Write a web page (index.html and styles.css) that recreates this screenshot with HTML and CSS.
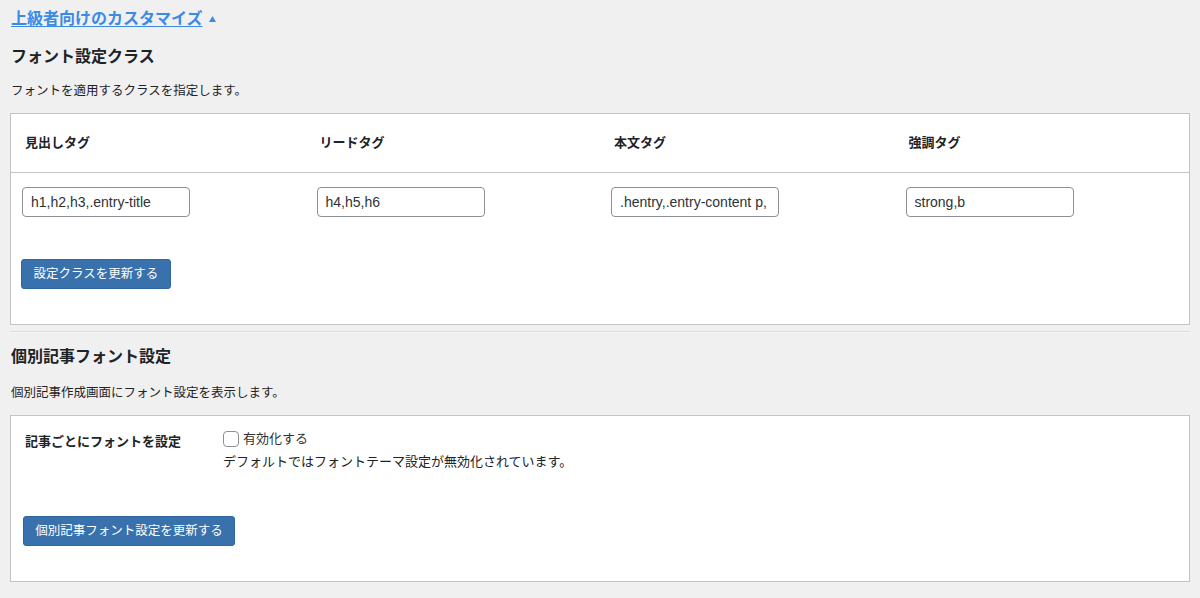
FILE: index.html
```html
<!DOCTYPE html>
<html lang="ja">
<head>
<meta charset="utf-8">
<title>上級者向けのカスタマイズ</title>
<link rel="stylesheet" href="styles.css">
</head>
<body>
<div class="page">
  <div class="toggle"><a href="#" class="toggle-link">上級者向けのカスタマイズ</a><svg class="caret" width="7" height="6" viewBox="0 0 7 6" aria-hidden="true"><polygon points="3.5,0 7,6 0,6" fill="#3b8be4"/></svg></div>

  <h2 class="sec-title first">フォント設定クラス</h2>
  <p class="sec-desc">フォントを適用するクラスを指定します。</p>
  <div class="box">
    <div class="class-grid head">
      <div class="th">見出しタグ</div>
      <div class="th">リードタグ</div>
      <div class="th">本文タグ</div>
      <div class="th">強調タグ</div>
    </div>
    <div class="class-grid body-row">
      <div class="td"><input class="text-input" type="text" value="h1,h2,h3,.entry-title"></div>
      <div class="td"><input class="text-input" type="text" value="h4,h5,h6"></div>
      <div class="td"><input class="text-input" type="text" value=".hentry,.entry-content p,"></div>
      <div class="td"><input class="text-input" type="text" value="strong,b"></div>
    </div>
    <div class="btn-row"><button class="btn" type="button">設定クラスを更新する</button></div>
  </div>

  <hr class="sep">

  <h2 class="sec-title second">個別記事フォント設定</h2>
  <p class="sec-desc second">個別記事作成画面にフォント設定を表示します。</p>
  <div class="box box2">
    <div class="form-row">
      <div class="form-label">記事ごとにフォントを設定</div>
      <div class="form-control">
        <label class="check"><input type="checkbox" class="checkbox"><span>有効化する</span></label>
        <p class="hint">デフォルトではフォントテーマ設定が無効化されています。</p>
      </div>
    </div>
    <div class="btn-row2"><button class="btn" type="button">個別記事フォント設定を更新する</button></div>
  </div>
</div>
</body>
</html>
```

FILE: styles.css
```css
* { box-sizing: border-box; }
html, body { margin: 0; padding: 0; }
body {
  background: #f0f0f1;
  color: #1d2327;
  font-family: "Liberation Sans", "Noto Sans CJK JP", sans-serif;
  font-size: 13px;
}
.page { padding: 0 10px; }

.toggle {
  padding-top: 8px;
  height: 30px;
  line-height: 22px;
  font-size: 16px;
  padding-left: 1px;
}
.toggle-link {
  color: #3b8be4;
  font-weight: 600;
  text-decoration: underline;
  text-underline-offset: 2px;
}
.caret {
  margin-left: 6px;
  vertical-align: 2px;
}

.sec-title {
  margin: 0;
  font-size: 16px;
  line-height: 22px;
  font-weight: 700;
  padding-left: 1px;
}
.sec-title.first { margin-top: 16px; }
.sec-title.second { margin-top: 13px; }
.sec-desc {
  margin: 13px 0 12px;
  font-size: 12.5px;
  line-height: 20px;
  padding-left: 1px;
}
.sec-desc.second { margin: 15px 0 12px; }

.box {
  background: #fff;
  border: 1px solid #c3c4c7;
}

.class-grid {
  display: grid;
  grid-template-columns: repeat(4, 1fr);
}
.class-grid.head {
  border-bottom: 1px solid #c3c4c7;
}
.th {
  padding: 19px 0 19px 14px;
  font-weight: 700;
  font-size: 13px;
  line-height: 20px;
}
.body-row .td {
  padding: 14px 0 0 11px;
}
.text-input {
  width: 168px;
  height: 30px;
  border: 1px solid #8c8f94;
  border-radius: 4px;
  padding: 0 8px;
  font-family: "Liberation Sans", "Noto Sans CJK JP", sans-serif;
  font-size: 14px;
  color: #2c3338;
  background: #fff;
  display: block;
}

.btn-row { padding: 42px 0 35px 10px; }
.btn {
  background: #3871ab;
  border: 1px solid #2f65a0;
  border-radius: 3px;
  color: #fff;
  font-family: "Liberation Sans", "Noto Sans CJK JP", sans-serif;
  font-size: 12.5px;
  height: 30px;
  padding: 0 11px;
  line-height: 28px;
  display: block;
  white-space: nowrap;
}
.btn-row .btn { min-width: 150px; }

.sep {
  margin: 6px 0 0;
  border: 0;
  border-top: 1px solid #dcdcde;
  border-bottom: 1px solid #f6f7f7;
}

.box2 { padding-top: 16px; }
.form-row {
  display: grid;
  grid-template-columns: 212px 1fr;
}
.form-label {
  padding-left: 14px;
  font-weight: 700;
  font-size: 13px;
  line-height: 20px;
}
.check {
  display: flex;
  align-items: center;
  gap: 4px;
  height: 16px;
  font-size: 13px;
  line-height: 16px;
  color: #2c3338;
  margin-top: -1px;
}
.checkbox {
  appearance: none;
  -webkit-appearance: none;
  width: 16px;
  height: 16px;
  margin: 0;
  border: 1px solid #8c8f94;
  border-radius: 4px;
  background: #fff;
}
.hint {
  margin: 4px 0 0;
  font-size: 13px;
  line-height: 22px;
}
.btn-row2 { padding: 43px 0 35px 12px; }
.btn-row2 .btn { min-width: 212px; }
```
